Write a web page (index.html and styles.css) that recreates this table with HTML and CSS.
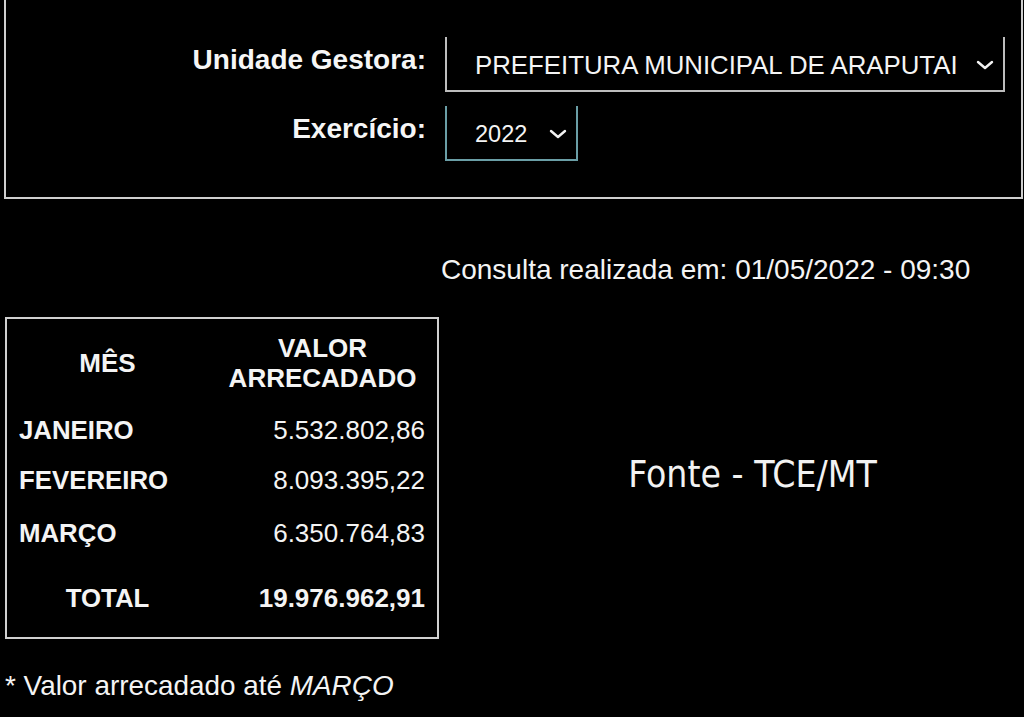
FILE: index.html
```html
<!DOCTYPE html>
<html lang="pt-BR">
<head>
<meta charset="utf-8">
<title>Valor arrecadado</title>
<link rel="stylesheet" href="styles.css">
</head>
<body>
<div class="filters">
  <div class="filter-grid">
    <label class="filter-label">Unidade Gestora:</label>
    <div class="select select-wide">
      <span class="select-text">PREFEITURA MUNICIPAL DE ARAPUTAI</span>
      <svg class="chev" width="18" height="10" viewBox="0 0 18 10"><polyline points="2,2 9,8 16,2" fill="none" stroke="#f2f2f2" stroke-width="2.4" stroke-linecap="round" stroke-linejoin="round"/></svg>
    </div>
    <label class="filter-label">Exercício:</label>
    <div class="select select-year">
      <span class="select-text year">2022</span>
      <svg class="chev" width="18" height="10" viewBox="0 0 18 10"><polyline points="2,2 9,8 16,2" fill="none" stroke="#f2f2f2" stroke-width="2.4" stroke-linecap="round" stroke-linejoin="round"/></svg>
    </div>
  </div>
</div>

<p class="consulta">Consulta realizada em: 01/05/2022 - 09:30</p>

<div class="content">
  <table class="arrec">
    <colgroup><col class="c1"><col class="c2"></colgroup>
    <thead>
      <tr class="head"><th class="th-mes">MÊS</th><th class="th-val">VALOR<br>ARRECADADO</th></tr>
    </thead>
    <tbody>
      <tr class="row r1"><td class="mes">JANEIRO</td><td class="val">5.532.802,86</td></tr>
      <tr class="row r2"><td class="mes">FEVEREIRO</td><td class="val">8.093.395,22</td></tr>
      <tr class="row r3"><td class="mes">MARÇO</td><td class="val">6.350.764,83</td></tr>
      <tr class="total"><td class="mes-total">TOTAL</td><td class="val val-total">19.976.962,91</td></tr>
    </tbody>
  </table>
  <div class="fonte">Fonte - TCE/MT</div>
</div>

<p class="nota">* Valor arrecadado até <em>MARÇO</em></p>
</body>
</html>
```

FILE: styles.css
```css
html, body {
  margin: 0;
  padding: 0;
  background: #000;
}

body {
  color: #f4f4f4;
  font-family: "Liberation Sans", Arial, sans-serif;
  width: 1024px;
  height: 717px;
  overflow: hidden;
}

.filters {
  margin: 0 1px 0 4px;
  border-left: 2px solid #cfcfcf;
  border-right: 2px solid #cfcfcf;
  border-bottom: 2px solid #cfcfcf;
  padding: 37px 0 36px 0;
}

.filter-grid {
  display: grid;
  grid-template-columns: 420px auto;
  column-gap: 19px;
  row-gap: 14px;
}

.filter-label {
  justify-self: end;
  align-self: start;
  padding-top: 7px;
  font-weight: bold;
  font-size: 28px;
  line-height: 32px;
  color: #f6f6f6;
}

.select {
  display: flex;
  align-items: center;
  justify-content: space-between;
  height: 55px;
  box-sizing: border-box;
  border-left: 2px solid #bdbdbd;
  border-right: 2px solid #bdbdbd;
  border-bottom: 2px solid #bdbdbd;
  padding: 2px 9px 0 28px;
}

.select-wide {
  width: 560px;
}

.select-year {
  width: 133px;
  border-color: #6a9ea6;
  justify-self: start;
}

.select-text {
  font-size: 25.8px;
  line-height: 30px;
  white-space: nowrap;
}

.select-text.year {
  font-size: 23.5px;
}

.chev {
  display: block;
  flex: none;
}

.consulta {
  margin: 55px 0 0 0;
  padding-left: 441px;
  font-size: 28px;
  line-height: 32px;
  white-space: nowrap;
}

.content {
  display: flex;
  align-items: center;
  margin-top: 31px;
  padding-left: 5px;
}

.arrec {
  border: 2px solid #d0d0d0;
  border-collapse: separate;
  border-spacing: 0;
  width: 434px;
  table-layout: fixed;
}

.c1 { width: 201px; }
.c2 { width: 229px; }

.arrec th,
.arrec td {
  padding: 0 12px;
}

.head { height: 87px; }
.head th {
  font-size: 26px;
  line-height: 30px;
  font-weight: bold;
  text-align: center;
  vertical-align: middle;
  padding-top: 0;
}
.th-val { padding-left: 0; padding-right: 0; }

.r1 { height: 48px; }
.r2 { height: 52px; }
.r3 { height: 54px; }
.total { height: 77px; }

.mes {
  font-weight: bold;
  font-size: 25.8px;
  text-align: left;
  white-space: nowrap;
}

.mes-total {
  font-weight: bold;
  font-size: 25.8px;
  text-align: center;
}

.val {
  font-size: 26px;
  text-align: right;
  white-space: nowrap;
}

.val-total {
  font-weight: bold;
}

.fonte {
  flex: 1;
  margin-left: 42px;
  text-align: center;
  font-family: "DejaVu Sans Condensed", "DejaVu Sans", sans-serif;
  font-stretch: condensed;
  font-size: 37px;
  line-height: 42px;
  color: #f2f2f2;
  padding-bottom: 6px;
}

.nota {
  margin: 31px 0 0 0;
  padding-left: 5px;
  font-size: 27.9px;
  line-height: 32px;
  white-space: nowrap;
}

.nota em {
  font-style: italic;
}
```
